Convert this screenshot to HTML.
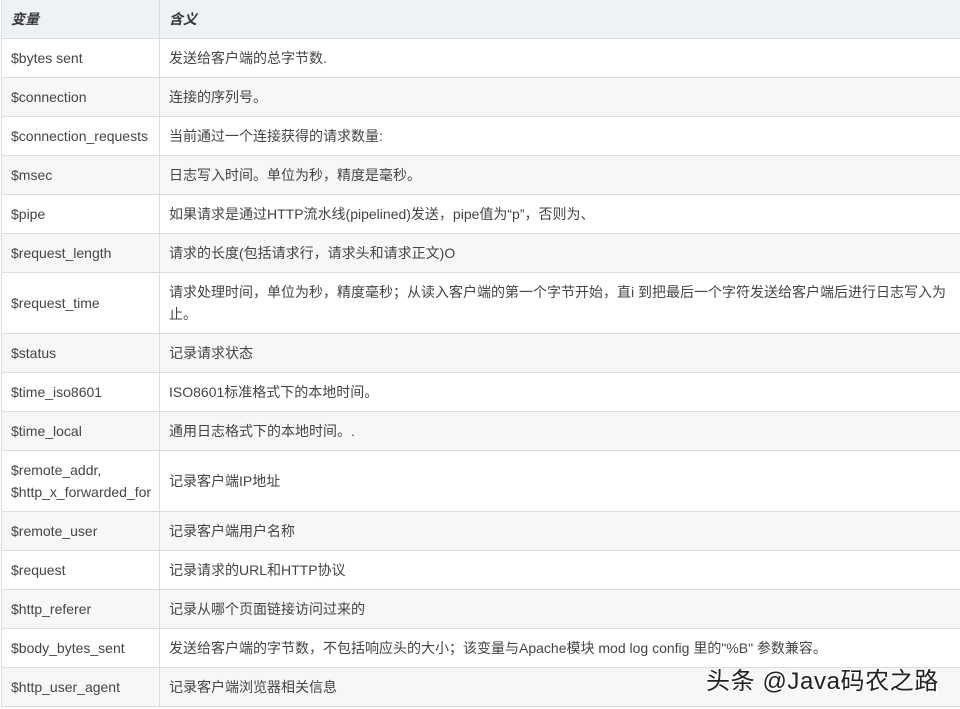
<!DOCTYPE html>
<html><head><meta charset="utf-8"><style>
html,body{margin:0;padding:0;background:#fff;width:960px;height:709px;overflow:hidden}
table{border-collapse:collapse;position:absolute;left:1px;top:-1px;width:962px;table-layout:fixed;font-family:"Liberation Sans","Noto Sans CJK SC",sans-serif;font-size:14px;color:#444}
td,th{border:1px solid #dcdcdc;padding:0 0 0 9px;height:38px;vertical-align:middle;line-height:22px;text-align:left}
th{background:#eef1f5;font-style:italic;font-weight:bold;color:#333}
tr:nth-child(odd) td{background:#f7f7f7}
col.a{width:158px}
.t td{height:60px}
.wm{position:absolute;left:706px;top:661px;font-family:"Liberation Sans","Noto Sans CJK SC",sans-serif;font-size:24px;letter-spacing:0.6px;color:#222;text-shadow:1px 1px 0 #fff,-1px -1px 0 #fff,1px -1px 0 #fff,-1px 1px 0 #fff}
</style></head><body>
<table><colgroup><col class="a"><col></colgroup>
<tr><th>变量</th><th>含义</th></tr>
<tr><td>$bytes sent</td><td>发送给客户端的总字节数.</td></tr>
<tr><td>$connection</td><td>连接的序列号。</td></tr>
<tr><td>$connection_requests</td><td>当前通过一个连接获得的请求数量:</td></tr>
<tr><td>$msec</td><td>日志写入时间。单位为秒，精度是毫秒。</td></tr>
<tr><td>$pipe</td><td>如果请求是通过HTTP流水线(pipelined)发送，pipe值为“p”，否则为、</td></tr>
<tr><td>$request_length</td><td>请求的长度(包括请求行，请求头和请求正文)O</td></tr>
<tr class="t"><td>$request_time</td><td>请求处理时间，单位为秒，精度毫秒；从读入客户端的第一个字节开始，直i 到把最后一个字符发送给客户端后进行日志写入为止。</td></tr>
<tr><td>$status</td><td>记录请求状态</td></tr>
<tr><td>$time_iso8601</td><td>ISO8601标准格式下的本地时间。</td></tr>
<tr><td>$time_local</td><td>通用日志格式下的本地时间。.</td></tr>
<tr class="t"><td>$remote_addr,<br>$http_x_forwarded_for</td><td>记录客户端IP地址</td></tr>
<tr><td>$remote_user</td><td>记录客户端用户名称</td></tr>
<tr><td>$request</td><td>记录请求的URL和HTTP协议</td></tr>
<tr><td>$http_referer</td><td>记录从哪个页面链接访问过来的</td></tr>
<tr><td>$body_bytes_sent</td><td>发送给客户端的字节数，不包括响应头的大小；该变量与Apache模块 mod log config 里的"%B" 参数兼容。</td></tr>
<tr><td>$http_user_agent</td><td>记录客户端浏览器相关信息</td></tr>
</table>
<div class="wm">头条 @Java码农之路</div>
</body></html>
